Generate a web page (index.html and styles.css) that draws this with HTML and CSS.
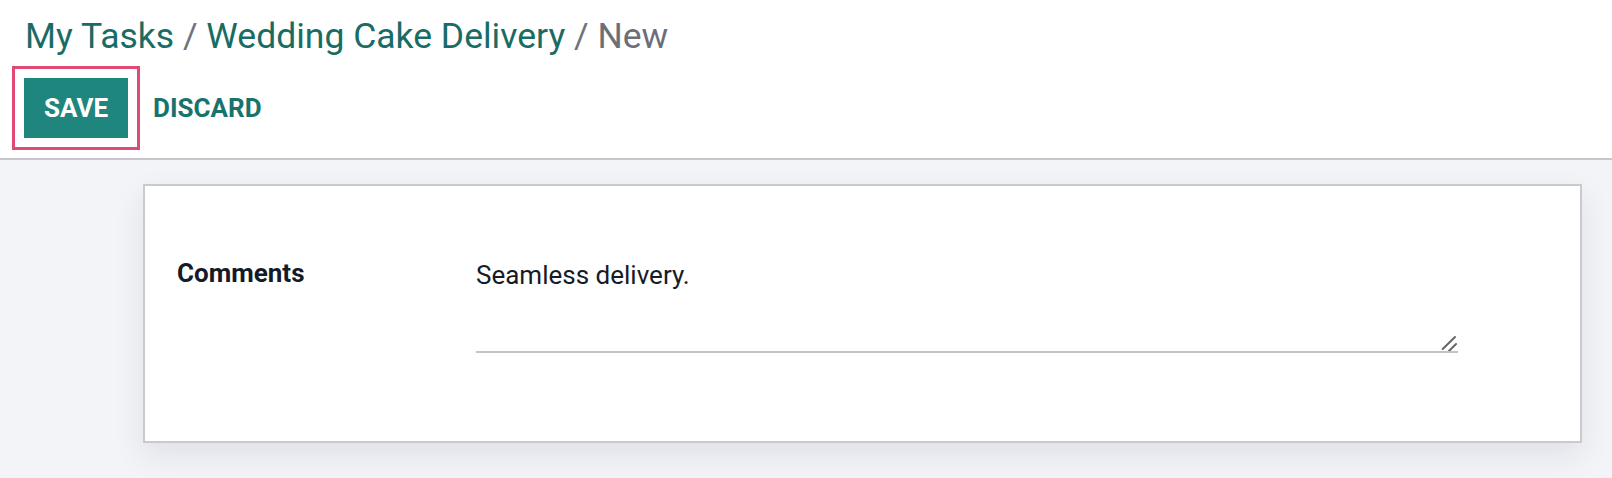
FILE: index.html
```html
<!DOCTYPE html>
<html lang="en">
<head>
  <meta charset="UTF-8">
  <title>New Task</title>
  <link rel="stylesheet" href="styles.css">
</head>
<body>

  <header class="control-panel">
    <div class="breadcrumb">
      <a href="#" class="crumb">My Tasks</a>
      <span class="sep">/</span>
      <a href="#" class="crumb">Wedding Cake Delivery</a>
      <span class="sep">/</span>
      <span class="current">New</span>
    </div>
    <div class="actions">
      <button class="btn btn-save">Save</button>
      <button class="btn btn-discard">Discard</button>
    </div>
  </header>

  <main class="content">
    <div class="sheet">
      <div class="field-row">
        <label class="field-label" for="comments">Comments</label>
        <div class="field-wrap">
          <textarea id="comments" class="field-input">Seamless delivery.</textarea>
          <!-- poignée de redimensionnement -->
          <svg class="resizer" width="16" height="16" viewBox="0 0 16 16">
            <line x1="1.7" y1="14" x2="14" y2="2" stroke="#666" stroke-width="2" stroke-linecap="round"/>
            <line x1="8" y1="16" x2="15" y2="9" stroke="#666" stroke-width="2" stroke-linecap="round"/>
          </svg>
        </div>
      </div>
    </div>
  </main>

</body>
</html>
```

FILE: styles.css
```css
html, body {
  margin: 0;
  height: 100%;
}

body {
  font-family: Roboto, "Liberation Sans", sans-serif;
  background: #f3f4f8;
  display: flex;
  flex-direction: column;
}

.control-panel {
  background: white;
  border-bottom: 2px solid #c6c7cd;
  padding: 15px 0 20px 25px;
}

.breadcrumb {
  font-size: 35.5px;
  line-height: 42px;
  white-space: nowrap;
}

.crumb {
  color: #196c64;
  text-decoration: none;
}

.sep {
  color: #6f737c;
}

.current {
  color: #6c6f78;
}

.actions {
  display: flex;
  align-items: center;
  gap: 5px;
  margin-top: 21px;
  margin-left: -1px;
}

.btn {
  font-family: Roboto, "Liberation Sans", sans-serif;
  font-size: 26px;
  font-weight: 700;
  text-transform: uppercase;
  height: 60px;
  line-height: 60px;
  padding: 0 20px;
  border: none;
  background: none;
  cursor: pointer;
}

.btn-save {
  background: #1e867d;
  color: white;
  outline: 3px solid #e04a72; /* cadre d'annotation */
  outline-offset: 9px;
}

.btn-discard {
  color: #17736b;
}

.content {
  flex: 1;
  padding: 24px 30px 0 143px;
}

.sheet {
  background: white;
  border: 2px solid #c9cad0;
  box-shadow: 0 12px 30px rgba(30, 35, 60, 0.09);
  padding: 68px 122px 88px 32px;
}

.field-row {
  display: flex;
  align-items: flex-start;
}

.field-label {
  width: 299px;
  flex-shrink: 0;
  font-size: 26px;
  font-weight: 700;
  line-height: 39px;
  color: #151a27;
}

.field-wrap {
  flex: 1;
  position: relative;
  display: flex;
}

.field-input {
  flex: 1;
  box-sizing: border-box;
  height: 99px;
  padding: 2px 0 0 0;
  margin: 0;
  border: none;
  border-bottom: 2px solid #c4c4c6;
  font-family: Roboto, "Liberation Sans", sans-serif;
  font-size: 26px;
  line-height: 39px;
  color: #161b27;
  background: transparent;
  outline: none;
  resize: none;
}

.resizer {
  position: absolute;
  right: 1px;
  bottom: 2px;
}
```
